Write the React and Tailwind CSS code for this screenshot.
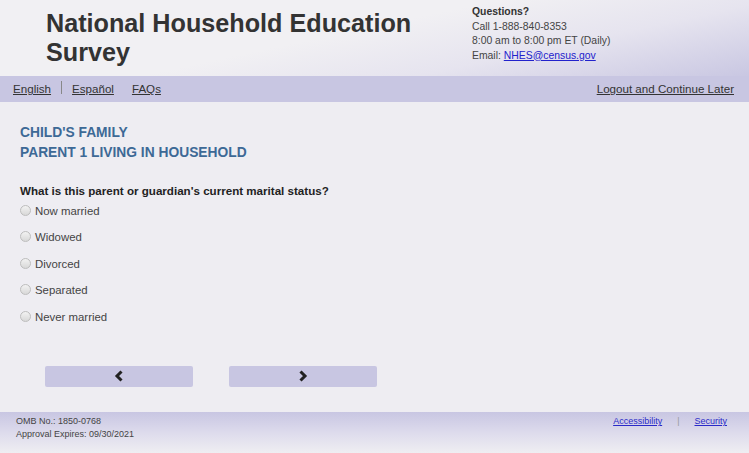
import React from "react";

const options = ["Now married", "Widowed", "Divorced", "Separated", "Never married"];

const Chevron = ({ dir }) => (
  <svg width="10" height="12" viewBox="0 0 10 12" className="block">
    {dir === "left" ? (
      <path d="M7.5 1.5 L3 6 L7.5 10.5" fill="none" stroke="#222" strokeWidth="3" />
    ) : (
      <path d="M2.5 1.5 L7 6 L2.5 10.5" fill="none" stroke="#222" strokeWidth="3" />
    )}
  </svg>
);

const App = () => {
  return (
    <div className="min-h-[453px] w-full bg-[#eeedf2] flex flex-col font-['Liberation_Sans',Arial,sans-serif] text-[#333]">
      {/* Header */}
      <div className="h-[76px] flex bg-[linear-gradient(168deg,#f1f0f3_45%,#e6e4ef_70%,#c9c7e2_100%)]">
        <h1 className="pl-[46px] pt-[9px] w-[472px] text-[25.2px] leading-[29px] font-bold text-[#333]">
          National Household Education Survey
        </h1>
        <div className="pt-[5px] text-[10.4px] leading-[14.5px] text-[#444]">
          <div className="font-bold text-[#333]">Questions?</div>
          <div>Call 1-888-840-8353</div>
          <div>8:00 am to 8:00 pm ET (Daily)</div>
          <div>
            Email: <a href="#" className="underline text-[#2222cc]">NHES@census.gov</a>
          </div>
        </div>
      </div>

      {/* Nav bar */}
      <div className="h-[26px] bg-[#c8c6e2] flex items-center justify-between pl-[13px] pr-[15px] text-[11.6px] text-[#333]">
        <div className="flex items-center">
          <a href="#" className="underline">English</a>
          <span className="ml-[10px] w-px h-[13px] bg-[#888] mb-[2px]" />
          <a href="#" className="underline ml-[10px]">Español</a>
          <a href="#" className="underline ml-[18px]">FAQs</a>
        </div>
        <a href="#" className="underline">Logout and Continue Later</a>
      </div>

      {/* Content */}
      <div className="flex-1 px-[20px] pt-[21px]">
        <h2 className="text-[13.8px] leading-[20px] font-bold text-[#3d6996]">
          <div>CHILD'S FAMILY</div>
          <div>PARENT 1 LIVING IN HOUSEHOLD</div>
        </h2>
        <p className="mt-[21px] text-[11.6px] font-bold text-[#222] leading-[14px]">
          What is this parent or guardian's current marital status?
        </p>
        <div className="mt-[6px] flex flex-col">
          {options.map((o) => (
            <label key={o} className="h-[26.4px] flex items-start text-[11.4px] text-[#444] leading-[14px]">
              <span className="mt-[1px] w-[11px] h-[11px] rounded-full border border-[#bdbdbd] bg-[linear-gradient(#f2f2f2,#d8d8d8)]" />
              <span className="ml-[4px]">{o}</span>
            </label>
          ))}
        </div>
        <div className="mt-[30px] pl-[25px] flex gap-[36px]">
          <button className="w-[148px] h-[21px] bg-[#c8c6e2] rounded-[2px] flex items-center justify-center">
            <Chevron dir="left" />
          </button>
          <button className="w-[148px] h-[21px] bg-[#c8c6e2] rounded-[2px] flex items-center justify-center">
            <Chevron dir="right" />
          </button>
        </div>
      </div>

      {/* Footer */}
      <div className="h-[41px] mt-[25px] bg-[linear-gradient(#c8c6e2,#dddbec_50%,#efeef2)] flex justify-between pl-[16px] pr-[22px] pt-[3px] text-[9px] leading-[13px] text-[#444]">
        <div>
          <div>OMB No.: 1850-0768</div>
          <div>Approval Expires: 09/30/2021</div>
        </div>
        <div className="flex">
          <a href="#" className="underline text-[#2a2ac8]">Accessibility</a>
          <span className="mx-[15px] text-[#999]">|</span>
          <a href="#" className="underline text-[#2a2ac8]">Security</a>
        </div>
      </div>
    </div>
  );
};

export default App;
